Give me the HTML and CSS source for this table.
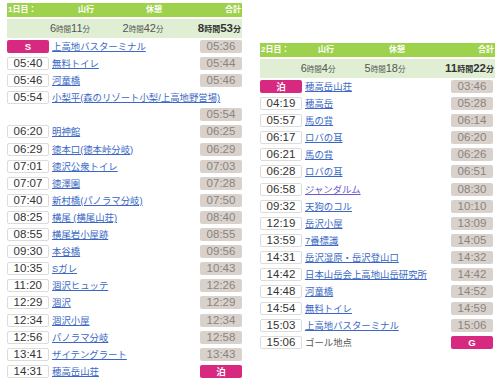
FILE: index.html
```html
<!DOCTYPE html>
<html lang="ja">
<head>
<meta charset="utf-8">
<title>コースタイム</title>
<link rel="stylesheet" href="styles.css">
</head>
<body>
<div class="page">
  <section class="day day-1">
    <div class="head">
      <span class="label">1日目：</span><span class="c">山行</span><span class="c">休憩</span><span class="r">合計</span>
    </div>
    <div class="sum">
      <span></span>
      <span class="c"><b class="n">6</b>時間<b class="n">11</b>分</span>
      <span class="c"><b class="n">2</b>時間<b class="n">42</b>分</span>
      <span class="r total"><b class="n">8</b>時間<b class="n">53</b>分</span>
    </div>
    <div class="list">
      <div class="row"><span class="t badge">S</span><a class="place" href="#">上高地バスターミナル</a><span class="arr">05:36</span></div>
      <div class="row"><span class="t">05:40</span><a class="place" href="#">無料トイレ</a><span class="arr">05:44</span></div>
      <div class="row"><span class="t">05:46</span><a class="place" href="#">河童橋</a><span class="arr">05:46</span></div>
      <div class="row"><span class="t">05:54</span><a class="place" href="#">小梨平(森のリゾート小梨/上高地野営場)</a><span class="arr">05:54</span></div>
      <div class="row"><span class="t">06:20</span><a class="place" href="#">明神館</a><span class="arr">06:25</span></div>
      <div class="row"><span class="t">06:29</span><a class="place" href="#">徳本口(徳本峠分岐)</a><span class="arr">06:29</span></div>
      <div class="row"><span class="t">07:01</span><a class="place" href="#">徳沢公衆トイレ</a><span class="arr">07:03</span></div>
      <div class="row"><span class="t">07:07</span><a class="place" href="#">徳澤園</a><span class="arr">07:28</span></div>
      <div class="row"><span class="t">07:40</span><a class="place" href="#">新村橋(パノラマ分岐)</a><span class="arr">07:50</span></div>
      <div class="row"><span class="t">08:25</span><a class="place" href="#">横尾 (横尾山荘)</a><span class="arr">08:40</span></div>
      <div class="row"><span class="t">08:55</span><a class="place" href="#">横尾岩小屋跡</a><span class="arr">08:55</span></div>
      <div class="row"><span class="t">09:30</span><a class="place" href="#">本谷橋</a><span class="arr">09:56</span></div>
      <div class="row"><span class="t">10:35</span><a class="place" href="#">Sガレ</a><span class="arr">10:43</span></div>
      <div class="row"><span class="t">11:20</span><a class="place" href="#">涸沢ヒュッテ</a><span class="arr">12:26</span></div>
      <div class="row"><span class="t">12:29</span><a class="place" href="#">涸沢</a><span class="arr">12:29</span></div>
      <div class="row"><span class="t">12:34</span><a class="place" href="#">涸沢小屋</a><span class="arr">12:34</span></div>
      <div class="row"><span class="t">12:56</span><a class="place" href="#">パノラマ分岐</a><span class="arr">12:58</span></div>
      <div class="row"><span class="t">13:41</span><a class="place" href="#">ザイテングラート</a><span class="arr">13:43</span></div>
      <div class="row"><span class="t">14:31</span><a class="place" href="#">穂高岳山荘</a><span class="arr badge">泊</span></div>
    </div>
  </section>

  <section class="day day-2">
    <div class="head">
      <span class="label">2日目：</span><span class="c">山行</span><span class="c">休憩</span><span class="r">合計</span>
    </div>
    <div class="sum">
      <span></span>
      <span class="c"><b class="n">6</b>時間<b class="n">4</b>分</span>
      <span class="c"><b class="n">5</b>時間<b class="n">18</b>分</span>
      <span class="r total"><b class="n">11</b>時間<b class="n">22</b>分</span>
    </div>
    <div class="list">
      <div class="row"><span class="t badge">泊</span><a class="place" href="#">穂高岳山荘</a><span class="arr">03:46</span></div>
      <div class="row"><span class="t">04:19</span><a class="place" href="#">穂高岳</a><span class="arr">05:28</span></div>
      <div class="row"><span class="t">05:57</span><a class="place" href="#">馬の背</a><span class="arr">06:14</span></div>
      <div class="row"><span class="t">06:17</span><a class="place" href="#">ロバの耳</a><span class="arr">06:20</span></div>
      <div class="row"><span class="t">06:21</span><a class="place" href="#">馬の背</a><span class="arr">06:26</span></div>
      <div class="row"><span class="t">06:28</span><a class="place" href="#">ロバの耳</a><span class="arr">06:51</span></div>
      <div class="row"><span class="t">06:58</span><a class="place visited" href="#">ジャンダルム</a><span class="arr">08:30</span></div>
      <div class="row"><span class="t">09:32</span><a class="place" href="#">天狗のコル</a><span class="arr">10:10</span></div>
      <div class="row"><span class="t">12:19</span><a class="place" href="#">岳沢小屋</a><span class="arr">13:09</span></div>
      <div class="row"><span class="t">13:59</span><a class="place" href="#">7番標識</a><span class="arr">14:05</span></div>
      <div class="row"><span class="t">14:31</span><a class="place" href="#">岳沢湿原・岳沢登山口</a><span class="arr">14:32</span></div>
      <div class="row"><span class="t">14:42</span><a class="place" href="#">日本山岳会上高地山岳研究所</a><span class="arr">14:42</span></div>
      <div class="row"><span class="t">14:48</span><a class="place" href="#">河童橋</a><span class="arr">14:52</span></div>
      <div class="row"><span class="t">14:54</span><a class="place" href="#">無料トイレ</a><span class="arr">14:59</span></div>
      <div class="row"><span class="t">15:03</span><a class="place" href="#">上高地バスターミナル</a><span class="arr">15:06</span></div>
      <div class="row"><span class="t">15:06</span><span class="place plain">ゴール地点</span><span class="arr badge">G</span></div>
    </div>
  </section>
</div>
</body>
</html>
```

FILE: styles.css
```css
html, body {
  margin: 0;
  padding: 0;
  background: #fff;
}

body {
  font-family: "Liberation Sans", "Noto Sans CJK JP", sans-serif;
  color: #333;
}

.page {
  display: flex;
  align-items: flex-start;
  gap: 18px;
  padding: 3px 0 0 7px;
}

.day {
  width: 235px;
  flex: 0 0 235px;
}

.day-2 {
  margin-top: 40px;
}

.head {
  display: grid;
  align-items: center;
  height: 14px;
  padding: 0 1px;
  background: #9fd24c;
  color: #fff;
  font-weight: bold;
  font-size: 8px;
  line-height: 14px;
}

.day-1 .head { grid-template-columns: 45px 66px 70px 1fr; }
.day-2 .head { grid-template-columns: 30px 70px 72px 1fr; }

.sum {
  display: grid;
  align-items: center;
  height: 19px;
  margin-top: 2px;
  padding: 0 1px;
  background: #e0efd3;
  color: #555;
  font-size: 7.5px;
  line-height: 19px;
}

.day-1 .sum { grid-template-columns: 30px 64px 82px 1fr; }
.day-2 .sum { grid-template-columns: 27px 60px 74px 1fr; }

.c { text-align: center; white-space: nowrap; }
.r { text-align: right; white-space: nowrap; }

.n {
  font-size: 11px;
  font-weight: normal;
}

.total {
  font-weight: bold;
  color: #333;
  font-size: 8px;
}

.total .n {
  font-weight: bold;
  font-size: 11.5px;
}

.list {
  display: flex;
  flex-direction: column;
  gap: 4.1px;
  margin-top: 2px;
}

.day-2 .list {
  padding-right: 2px;
}

.row {
  display: flex;
  flex-wrap: wrap;
  align-items: center;
  row-gap: 4.1px;
}

.t,
.arr {
  box-sizing: border-box;
  width: 42px;
  height: 13px;
  flex: 0 0 42px;
  border-radius: 2px;
  font-size: 11.5px;
  line-height: 13px;
  text-align: center;
}

.t {
  border: 1px solid #dcdcdc;
  line-height: 11px;
  background: #fff;
  color: #333;
}

.arr {
  margin-left: auto;
  background: #d9d2cc;
  color: #8a847f;
}

.badge,
.t.badge {
  border: none;
  background: #d6297f;
  color: #fff;
  font-size: 9.5px;
  font-weight: bold;
  line-height: 13px;
}

.place {
  margin-left: 3px;
  font-size: 9.4px;
  line-height: 13px;
  color: #3a68c4;
  text-decoration: underline;
  white-space: nowrap;
}

.place.visited {
  color: #6a5acb;
}

.place.plain {
  color: #555;
  text-decoration: none;
}
```
